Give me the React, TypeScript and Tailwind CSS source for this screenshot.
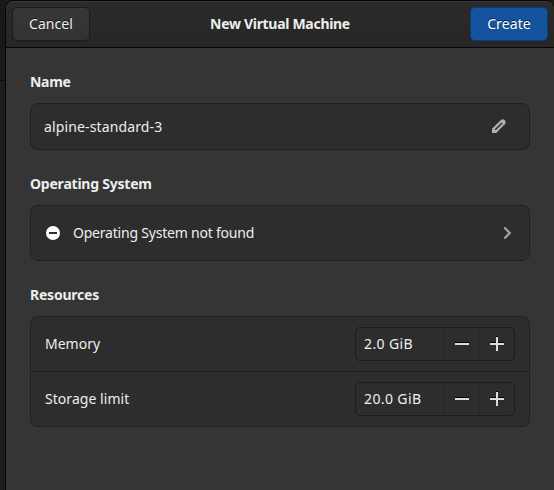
import React from "react";

function MinusGlyph() {
  return (
    <svg width="16" height="16" viewBox="0 0 16 16" shapeRendering="crispEdges">
      <path d="M1 6h14v1H1z" fill="#050505" />
      <path d="M1 7h14v2H1z" fill="#dcdcdc" />
    </svg>
  );
}

function PlusGlyph() {
  return (
    <svg width="16" height="16" viewBox="0 0 16 16" shapeRendering="crispEdges">
      <path d="M1 6h14v1H1zM7 0h2v1H7z" fill="#050505" />
      <path d="M1 7h14v2H1zM7 1h2v14H7z" fill="#dcdcdc" />
    </svg>
  );
}

function SpinButton({ value }: { value: string }) {
  return (
    <div className="flex h-[34px] w-40 overflow-hidden rounded-[5px] border border-[#1c1c1c] bg-[#2d2d2d]">
      <div className="flex-1 pl-2 leading-8 tracking-[0.38px]">{value}</div>
      <button className="flex w-[35px] items-center justify-center border-l border-[#282828]">
        <MinusGlyph />
      </button>
      <button className="flex w-[35px] items-center justify-center border-l border-[#282828]">
        <PlusGlyph />
      </button>
    </div>
  );
}

const card = "rounded-lg border border-[#202020] bg-[#2d2d2d]";

export default function App() {
  return (
    <div className="flex h-[490px] w-[554px] overflow-hidden bg-[#1b1b1b] font-['Noto_Sans',sans-serif] text-[14px] text-[#eeeeec]">
      <div className="flex w-[5px] flex-col">
        <div className="h-20 bg-[#191919]" />
        <div className="h-px bg-[#0c0c0c]" />
        <div className="flex-1 bg-[#1e1e1e]" />
      </div>
      <div className="flex flex-1 flex-col overflow-hidden rounded-t-lg border-t border-l border-[#050505] bg-[#353535]">
        <header className="flex h-[47px] shrink-0 items-center justify-between rounded-t-[7px] border-t border-b border-t-[#383838] border-b-[#070707] bg-linear-to-b from-[#2b2b2b] to-[#262626] px-1.5 pb-px">
          <button className="h-[34px] w-[78px] rounded-[5px] border border-[#1b1b1b] bg-linear-to-b from-[#373737] to-[#323232] leading-[30px] tracking-[0.05px] [text-shadow:0_-1px_rgba(0,0,0,0.7)]">
            Cancel
          </button>
          <h1 className="pb-0.5 font-bold tracking-[-0.3px]">New Virtual Machine</h1>
          <button className="h-[34px] w-[78px] rounded-[5px] border border-[#103c70] bg-[#15539e] leading-[30px] text-white tracking-[0.1px] [text-shadow:0_-1px_rgba(0,0,0,0.6)]">
            Create
          </button>
        </header>
        <main className="flex flex-col px-6 pt-[23px]">
          <h2 className="h-8 font-bold leading-[22px] tracking-[-0.3px]">Name</h2>
          <div className={`${card} flex h-[47px] items-center justify-between pl-[13px] pr-[22px]`}>
            <span className="tracking-[0.13px]">alpine-standard-3</span>
            <svg className="mb-px" width="16" height="16" viewBox="0 0 16 16">
              <path
                fill="#b0b0b0"
                fillRule="evenodd"
                d="M1 15v-4.200L9.900 1.900a3 3 0 0 1 4.200 4.200L5.200 15zM3.700 11.300l1 1 6.900-6.900-1-1z"
              />
            </svg>
          </div>
          <h2 className="mt-[23px] h-8 font-bold leading-[22px] tracking-[-0.22px]">Operating System</h2>
          <div className={`${card} flex h-14 items-center pl-3.5 pr-3.5`}>
            <svg width="16" height="16" viewBox="0 0 16 16">
              <circle cx="8" cy="8" r="7" fill="#ffffff" />
              <path d="M4 7h8v2H4z" fill="#2d2d2d" />
            </svg>
            <span className="ml-3 flex-1 pb-0.5 tracking-[-0.21px]">Operating System not found</span>
            <svg width="16" height="16" viewBox="0 0 16 16">
              <path d="m5.300 2.500 5.500 5.500-5.500 5.500" fill="none" stroke="#a5a5a5" strokeWidth="2.200" />
            </svg>
          </div>
          <h2 className="mt-[23px] h-8 font-bold leading-[22px] tracking-[-0.22px]">Resources</h2>
          <div className={card}>
            <div className="flex h-[54px] items-center justify-between px-3.5">
              <span className="pb-0.5">Memory</span>
              <SpinButton value="2.0 GiB" />
            </div>
            <div className="flex h-[55px] items-center justify-between border-t border-[#202020] px-3.5">
              <span className="pb-0.5 tracking-[0.05px]">Storage limit</span>
              <SpinButton value="20.0 GiB" />
            </div>
          </div>
        </main>
      </div>
    </div>
  );
}
